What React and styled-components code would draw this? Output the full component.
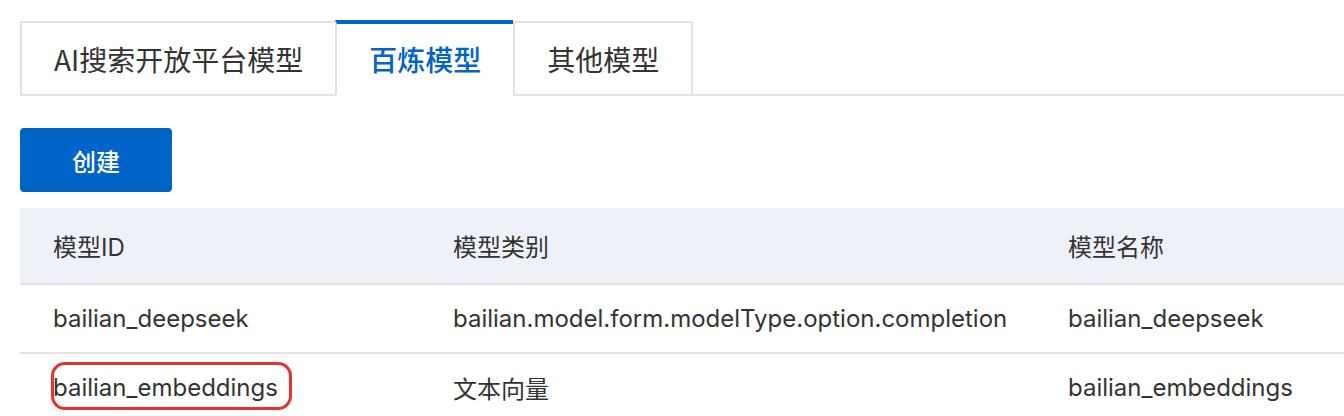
import styled, { createGlobalStyle } from "styled-components";

const GlobalStyle = createGlobalStyle`
  html, body {
    margin: 0;
    padding: 0;
    background: #fff;
  }

  body {
    font-family: Inter, "Noto Sans CJK SC", sans-serif;
    color: #333;
    overflow: hidden;
  }
`;

const Page = styled.div`
  width: 1344px;
  height: 416px;
  padding-top: 20px;
  padding-left: 20px;
  box-sizing: border-box;
`;

const TabBar = styled.div`
  display: flex;
  align-items: flex-end;
`;

const Tab = styled.div`
  box-sizing: border-box;
  height: ${({ $active }) => ($active ? "76px" : "75px")};
  padding: 0 32px;
  display: flex;
  align-items: center;
  font-size: 28px;
  font-family: "Noto Sans CJK SC", sans-serif;
  color: ${({ $active }) => ($active ? "#0064c8" : "#333")};
  font-weight: ${({ $active }) => ($active ? 500 : 400)};
  background: #fff;
  border-left: 2px solid #e3e3e3;
  border-right: ${({ $last }) => ($last ? "2px solid #e3e3e3" : "none")};
  border-top: ${({ $active }) =>
    $active ? "4px solid #0064c8" : "2px solid #e3e3e3"};
  border-bottom: 2px solid ${({ $active }) => ($active ? "#fff" : "#e3e3e3")};
  white-space: nowrap;
`;

const TabFiller = styled.div`
  flex: 1;
  border-bottom: 2px solid #e3e3e3;
`;

const Toolbar = styled.div`
  padding: 32px 0 16px;
`;

const PrimaryButton = styled.button`
  width: 152px;
  height: 64px;
  border: none;
  border-radius: 4px;
  background: #0064c8;
  color: #fff;
  font-family: "Noto Sans CJK SC", sans-serif;
  font-size: 24px;
  font-weight: 500;
  cursor: pointer;
`;

const Table = styled.table`
  width: 100%;
  border-collapse: collapse;
  table-layout: fixed;
  font-size: 24px;
`;

const HeadRow = styled.tr`
  background: #eef1f7;
`;

const HeadCell = styled.th`
  box-sizing: border-box;
  height: 76px;
  padding: 0 0 0 33px;
  text-align: left;
  font-weight: 400;
  color: #333;
  border-bottom: 2px solid #e3e3e3;
  width: ${({ $width }) => $width || "auto"};
`;

const Cell = styled.td`
  height: 67px;
  padding: 0 0 0 33px;
  color: #333;
  border-bottom: 2px solid #e3e3e3;
  white-space: nowrap;
`;

const Marked = styled.span`
  position: relative;
  display: inline-block;
  line-height: 32px;

  &::after {
    content: "";
    position: absolute;
    left: -2px;
    right: -14px;
    top: -10px;
    bottom: -6px;
    border: 3px solid #e8302c;
    border-radius: 14px;
  }
`;

const rows = [
  {
    id: "bailian_deepseek",
    type: "bailian.model.form.modelType.option.completion",
    name: "bailian_deepseek",
  },
  {
    id: "bailian_embeddings",
    type: "文本向量",
    name: "bailian_embeddings",
    marked: true,
  },
];

export default function App() {
  return (
    <>
      <GlobalStyle />
      <Page>
        <TabBar>
          <Tab>AI搜索开放平台模型</Tab>
          <Tab $active>百炼模型</Tab>
          <Tab $last>其他模型</Tab>
          <TabFiller />
        </TabBar>

        <Toolbar>
          <PrimaryButton>创建</PrimaryButton>
        </Toolbar>

        <Table>
          <thead>
            <HeadRow>
              <HeadCell $width="400px">模型ID</HeadCell>
              <HeadCell $width="615px">模型类别</HeadCell>
              <HeadCell>模型名称</HeadCell>
            </HeadRow>
          </thead>
          <tbody>
            {rows.map((row) => (
              <tr key={row.id}>
                <Cell>{row.marked ? <Marked>{row.id}</Marked> : row.id}</Cell>
                <Cell>{row.type}</Cell>
                <Cell>{row.name}</Cell>
              </tr>
            ))}
          </tbody>
        </Table>
      </Page>
    </>
  );
}
